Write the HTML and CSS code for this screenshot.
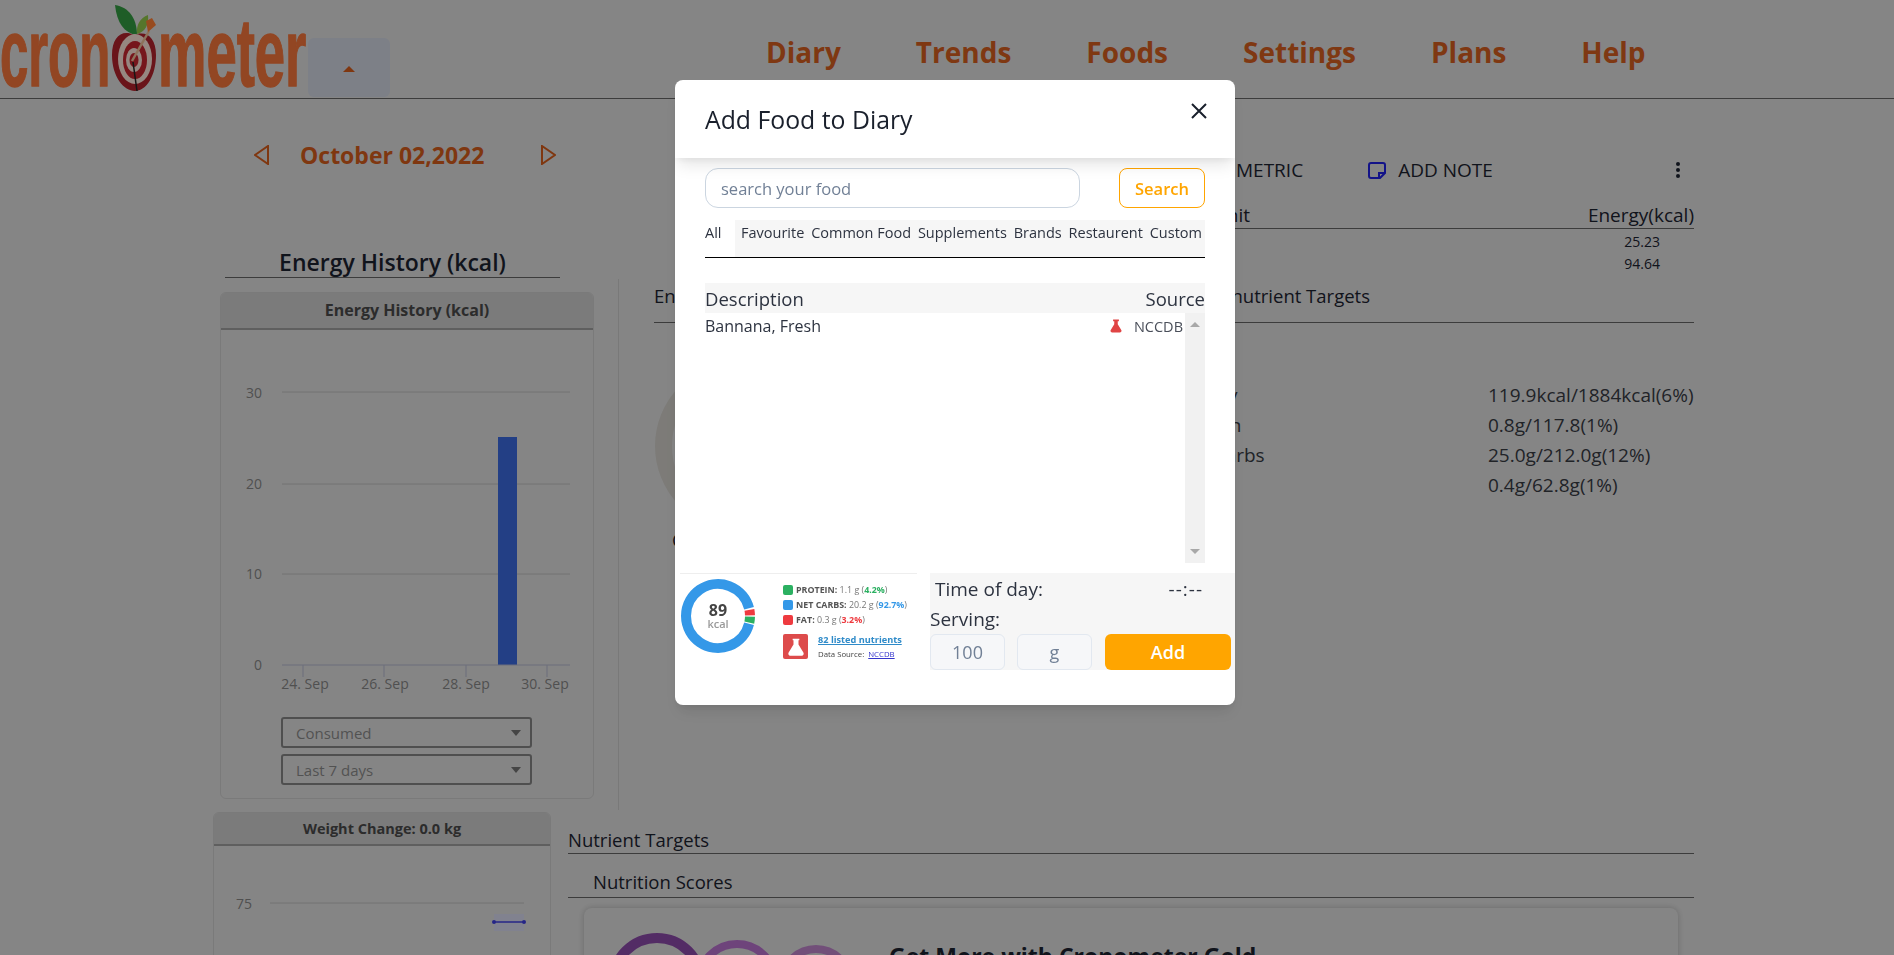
FILE: index.html
```html
<!DOCTYPE html>
<html lang="en">
<head>
  <meta charset="UTF-8">
  <meta name="viewport" content="width=device-width, initial-scale=1.0">
  <title>Cronometer</title>
  <link rel="stylesheet" href="styles.css">
</head>
<body>

  <header class="topbar">
    <div class="logo">
      <span class="logo-word logo-cron">cron</span>
      <svg class="logo-apple" width="50" height="90" viewBox="0 0 50 90">
        <path d="M4 2c14 2 22 14 22 30C13 30 6 20 4 2z" fill="#2f8f3c"/>
        <path d="M37 12c-8 3-12 10-11 19 8-2 12-9 11-19z" fill="#84b544"/>
        <path d="M23 32c-12-6-22 2-22 20 0 22 12 36 23 36s21-15 21-36c0-18-10-25-22-20z" fill="#a31f28"/>
        <ellipse cx="24" cy="56" rx="17" ry="25" fill="#e6cfc6"/>
        <ellipse cx="24" cy="57" rx="12" ry="19" fill="#b5222b"/>
        <ellipse cx="23" cy="57" rx="8" ry="12" fill="#e6cfc6"/>
        <ellipse cx="23" cy="57" rx="4.5" ry="7" fill="#b5222b"/>
        <path d="M21 58l17-30" stroke="#d9b08c" stroke-width="2.5"/>
        <path d="M37 29l-2-11 6-3 4 7z" fill="#ea7430"/>
        <path d="M22 59l4 29" stroke="#222" stroke-width="1.5"/>
      </svg>
      <span class="logo-word logo-meter">meter</span>
    </div>
    <button class="logo-toggle"><span class="caret-up"></span></button>
    <nav class="main-nav">
      <a>Diary</a>
      <a>Trends</a>
      <a>Foods</a>
      <a>Settings</a>
      <a>Plans</a>
      <a>Help</a>
    </nav>
  </header>

  <main>
    <section class="energy-row">
      <div class="energy-col">
        <div class="date-row">
          <svg width="15" height="20" viewBox="0 0 15 20"><path d="M14 1v18L1 10z" fill="none" stroke="#c4551a" stroke-width="2"/></svg>
          <span class="date-text">October 02,2022</span>
          <svg width="15" height="20" viewBox="0 0 15 20"><path d="M1 1v18l13-9z" fill="none" stroke="#c4551a" stroke-width="2"/></svg>
        </div>
        <h2 class="energy-title">Energy History (kcal)</h2>
        <div class="chart-card">
          <div class="chart-head">Energy History (kcal)</div>
          <svg class="chart" width="372" height="387" viewBox="221 330 372 387">
            <g class="grid">
              <path d="M282 392h288M282 484h288M282 574h288"/>
            </g>
            <rect x="498" y="437" width="19" height="228" fill="#3662cd"/>
            <path class="axis" d="M282 665h288M303 665v12M384 665v12M466 665v12M547 665v12"/>
            <g class="chart-label" text-anchor="end">
              <text x="262" y="398">30</text>
              <text x="262" y="489">20</text>
              <text x="262" y="579">10</text>
              <text x="262" y="670">0</text>
            </g>
            <g class="chart-label" text-anchor="middle">
              <text x="305" y="689">24. Sep</text>
              <text x="385" y="689">26. Sep</text>
              <text x="466" y="689">28. Sep</text>
              <text x="545" y="689">30. Sep</text>
            </g>
          </svg>
          <div class="chart-select">Consumed<span class="caret-down"></span></div>
          <div class="chart-select">Last 7 days<span class="caret-down"></span></div>
        </div>
      </div>

      <div class="diary-col">
        <div class="toolbar">
          <span class="toolbar-metric">METRIC</span>
          <svg class="note-icon" width="18" height="17" viewBox="0 0 18 17"><path d="M3 1h12a2 2 0 0 1 2 2v8l-5 5H3a2 2 0 0 1-2-2V3a2 2 0 0 1 2-2zM11 16v-5h6" fill="none" stroke="#1e1ed2" stroke-width="2"/></svg>
          <span class="toolbar-note">ADD NOTE</span>
          <svg class="kebab" width="6" height="18" viewBox="0 0 6 18"><circle cx="3" cy="3" r="2"/><circle cx="3" cy="9" r="2"/><circle cx="3" cy="15" r="2"/></svg>
        </div>
        <div class="diary-table">
          <div class="diary-head"><span class="diary-unit">Unit</span><span class="diary-energy">Energy(kcal)</span></div>
          <div class="diary-row"><span class="diary-energy">25.23</span></div>
          <div class="diary-row"><span class="diary-energy">94.64</span></div>
        </div>
        <div class="summary">
          <div class="summary-head">
            <span class="summary-title">Energy Summary</span>
            <span>Macronutrient Targets</span>
          </div>
          <div class="summary-body">
            <div class="summary-ring">
              <svg width="170" height="170" viewBox="0 0 170 170"><circle cx="85" cy="85" r="76.5" fill="none" stroke="#c0beb9" stroke-width="17"/></svg>
              <div class="ring-label">Consumed</div>
            </div>
            <div class="macro-rows">
              <div class="macro-row"><span>Energy</span><span>119.9kcal/1884kcal(6%)</span></div>
              <div class="macro-row"><span>Protein</span><span>0.8g/117.8(1%)</span></div>
              <div class="macro-row"><span>Net Carbs</span><span>25.0g/212.0g(12%)</span></div>
              <div class="macro-row"><span>Fat</span><span>0.4g/62.8g(1%)</span></div>
            </div>
          </div>
        </div>
      </div>
    </section>

    <section class="lower-row">
      <div class="weight-card">
        <div class="chart-head">Weight Change: 0.0 kg</div>
        <svg class="chart" width="336" height="110" viewBox="214 846 336 110">
          <g class="grid"><path d="M270 903h254"/></g>
          <text class="chart-label" x="252" y="909" text-anchor="end">75</text>
          <rect x="494" y="914" width="30" height="17" fill="#c6c8dc"/>
          <path d="M494 922h30" stroke="#3a3ad0" stroke-width="1.5"/>
          <circle cx="494" cy="922" r="2" fill="#3a3ad0"/>
          <circle cx="524" cy="922" r="2" fill="#3a3ad0"/>
        </svg>
      </div>
      <div class="targets-col">
        <h3 class="targets-head">Nutrient Targets</h3>
        <h3 class="scores-head">Nutrition Scores</h3>
        <div class="gold-card">
          <svg class="gold-rings" width="260" height="110" viewBox="0 0 260 110">
            <circle cx="43" cy="49" r="44" fill="none" stroke="#80449c" stroke-width="10"/>
            <circle cx="123" cy="49" r="38" fill="none" stroke="#aa69be" stroke-width="8"/>
            <circle cx="202" cy="50" r="34" fill="none" stroke="#af7abb" stroke-width="8"/>
          </svg>
          <div class="gold-title">Get More with Cronometer Gold</div>
        </div>
      </div>
    </section>
  </main>

  <div class="overlay"></div>

  <div class="modal">
    <div class="modal-head">
      <span class="modal-title">Add Food to Diary</span>
      <svg class="modal-close" width="16" height="16" viewBox="0 0 16 16"><path d="M1 1l14 14M15 1L1 15" stroke="#1a202c" stroke-width="2"/></svg>
    </div>

    <div class="search-row">
      <input class="search-input" type="text" placeholder="search your food">
      <button class="search-button">Search</button>
    </div>

    <div class="tabs">
      <span class="tab-all">All</span>
      <div class="tab-group">
        <span>Favourite</span>
        <span>Common Food</span>
        <span>Supplements</span>
        <span>Brands</span>
        <span>Restaurent</span>
        <span>Custom</span>
      </div>
    </div>

    <div class="food-head"><span>Description</span><span>Source</span></div>
    <div class="food-body">
      <div class="food-list">
        <div class="food-row">
          <span class="food-name">Bannana, Fresh</span>
          <svg class="flask-small" width="14" height="14" viewBox="0 0 24 24"><path d="M7 1h10v3h-2v5l6 10a2.500 2.500 0 0 1-2 4H5a2.500 2.500 0 0 1-2-4l6-10V4H7z" fill="#e04444"/></svg>
          <span class="food-source">NCCDB</span>
        </div>
      </div>
      <div class="scrollbar">
        <span class="scroll-up"></span>
        <span class="scroll-down"></span>
      </div>
    </div>

    <div class="modal-foot">
      <div class="macro-panel">
        <svg class="donut" width="76" height="76" viewBox="0 0 76 76">
          <g fill="none" stroke-width="10">
            <path d="M69.05 45.74A32 32 0 1 1 69.05 30.26" stroke="#3498e8"/>
            <path d="M69.99 38.56A32 32 0 0 1 69.3 44.65" stroke="#2bb061"/>
            <path d="M69.99 37.44A32 32 0 0 0 69.41 31.89" stroke="#ee3a3f"/>
          </g>
          <text class="donut-value" x="38" y="38" text-anchor="middle">89</text>
          <text class="donut-unit" x="38" y="50" text-anchor="middle">kcal</text>
        </svg>
        <div class="macro-legend">
          <div class="legend-row"><i class="swatch swatch-green"></i><b>PROTEIN:</b>&nbsp;1.1 g (<b class="text-green">4.2%</b>)</div>
          <div class="legend-row"><i class="swatch swatch-blue"></i><b>NET CARBS:</b>&nbsp;20.2 g (<b class="text-blue">92.7%</b>)</div>
          <div class="legend-row"><i class="swatch swatch-red"></i><b>FAT:</b>&nbsp;0.3 g (<b class="text-red">3.2%</b>)</div>
          <div class="legend-source">
            <div class="flask-box">
              <svg width="20" height="20" viewBox="0 0 24 24"><path d="M8 2h8v2h-1v5l6 10a2.500 2.500 0 0 1-2 3.500H5A2.500 2.500 0 0 1 3 19L9 9V4H8z" fill="#fff"/></svg>
            </div>
            <div>
              <a class="nutrient-link">82 listed nutrients</a>
              <div class="data-source">Data Source: <a>NCCDB</a></div>
            </div>
          </div>
        </div>
      </div>

      <div class="entry-panel">
        <div class="time-row"><span>Time of day:</span><span class="time-value">--:--</span></div>
        <div class="serving-label">Serving:</div>
        <div class="serving-row">
          <input class="serving-input" type="text" value="100">
          <input class="serving-input" type="text" value="g">
          <button class="add-button">Add</button>
        </div>
      </div>
    </div>
  </div>

</body>
</html>
```

FILE: styles.css
```css
* {
  box-sizing: border-box;
}

body {
  margin: 0;
  height: 955px;
  overflow: hidden;
  background-color: #cdcdcd;
  color: #1a202c;
  font-family: "Open Sans", "Noto Sans", sans-serif;
}

h2, h3 {
  margin: 0;
  font-weight: 400;
}

/* top bar */
.topbar {
  display: flex;
  height: 99px;
  border-bottom: 1px solid #5c5c5c;
}

.logo {
  display: flex;
  width: 308px;
  height: 98px;
  flex-shrink: 0;
}

.logo-word {
  display: block;
  margin-top: 5px;
  font-family: "Liberation Sans", sans-serif;
  font-size: 96px;
  line-height: 96px;
  font-weight: 700;
  color: #e06c36;
  -webkit-text-stroke: 1.5px #e06c36;
  transform-origin: left top;
}

.logo-cron {
  margin-right: -97px;
  transform: scaleX(0.53);
}

.logo-meter {
  margin-right: -113px;
  transform: scaleX(0.567);
}

.logo-apple {
  flex-shrink: 0;
  margin: 3px -3px 0 0;
}

.logo-toggle {
  display: flex;
  align-items: center;
  justify-content: center;
  width: 82px;
  height: 59px;
  margin-top: 38px;
  padding: 0;
  border: none;
  border-radius: 6px;
  background-color: #c0c5d0;
}

.caret-up {
  margin-top: 3px;
  border-left: 6px solid transparent;
  border-right: 6px solid transparent;
  border-bottom: 6px solid #c4551a;
}

.main-nav {
  display: flex;
  gap: 75px;
  margin-left: 376px;
  padding-top: 31px;
  font-size: 28px;
  line-height: 42px;
  font-weight: 700;
  color: #c4571c;
}

/* energy column */
.energy-row {
  display: flex;
  height: 713px;
  padding-left: 219px;
}

.energy-col {
  width: 399px;
  flex-shrink: 0;
}

.date-row {
  display: flex;
  align-items: center;
  height: 34px;
  margin-top: 39px;
  padding-left: 35px;
}

.date-text {
  width: 272px;
  padding-left: 31px;
  font-size: 23px;
  font-weight: 700;
  color: #c4551a;
}

.energy-title {
  width: 335px;
  margin: 75px 0 14px 6px;
  border-bottom: 1px solid #5c5c5c;
  font-size: 23px;
  line-height: 30px;
  font-weight: 600;
  text-align: center;
}

.chart-card {
  width: 374px;
  height: 507px;
  margin-left: 1px;
  border: 1px solid #bcbcbc;
  border-radius: 6px;
}

.chart-head {
  height: 37px;
  border-bottom: 2px solid #939393;
  border-radius: 5px 5px 0 0;
  background-color: #bdbdbd;
  color: #444;
  font-size: 16px;
  line-height: 34px;
  font-weight: 700;
  text-align: center;
}

.chart {
  display: block;
}

.grid path {
  fill: none;
  stroke: #b0b0b0;
}

.axis {
  fill: none;
  stroke: #a5a9bd;
}

.chart-label {
  fill: #7b7b7b;
  font-size: 14px;
}

.chart-select {
  display: flex;
  align-items: center;
  justify-content: space-between;
  width: 251px;
  height: 31px;
  margin: 0 0 6px 60px;
  padding: 0 9px 0 13px;
  border: 2px solid #7a7a7a;
  border-radius: 3px;
  color: #7f7f7f;
  font-size: 15px;
}

.caret-down {
  border-left: 5px solid transparent;
  border-right: 5px solid transparent;
  border-top: 6px solid #6a6a6a;
}

/* diary column */
.diary-col {
  width: 1076px;
  flex-shrink: 0;
}

.toolbar {
  display: flex;
  align-items: center;
  height: 34px;
  margin-top: 54px;
  padding-left: 618px;
  font-size: 19px;
}

.note-icon {
  margin-left: 65px;
}

.toolbar-note {
  width: 277px;
  margin-left: 12px;
}

.kebab {
  fill: #1a202c;
}

.diary-table {
  margin-top: 15px;
}

.diary-head {
  display: flex;
  height: 27px;
  border-bottom: 1px solid #5c5c5c;
  margin-left: 300px;
  padding-left: 295px;
  font-size: 19px;
  line-height: 26px;
}

.diary-unit {
  width: 332px;
}

.diary-head .diary-energy {
  margin-left: auto;
}

.diary-row {
  display: flex;
  justify-content: flex-end;
  height: 22px;
  padding-right: 34px;
  font-size: 14px;
  line-height: 25px;
}

.summary {
  height: 531px;
  margin-top: 6px;
  padding-left: 35px;
  border-left: 1px solid #bababa;
}

.summary-head {
  display: flex;
  height: 44px;
  border-bottom: 1px solid #5c5c5c;
  font-size: 18.5px;
  line-height: 33px;
}

.summary-title {
  width: 523px;
}

.summary-body {
  display: flex;
}

.summary-ring {
  width: 523px;
  padding: 38px 0 0 1px;
}

.summary-ring svg {
  display: block;
}

.ring-label {
  margin: -2px 0 0 17px;
  font-size: 18.5px;
  line-height: 22px;
}

.macro-rows {
  margin-top: 57px;
}

.macro-row {
  display: grid;
  grid-template-columns: 311px 206px;
  font-size: 19px;
  line-height: 30px;
  color: #33363d;
}

/* lower row */
.lower-row {
  display: flex;
  gap: 17px;
  padding-left: 213px;
}

.weight-card {
  width: 338px;
  height: 200px;
  flex-shrink: 0;
  border: 1px solid #bcbcbc;
  border-radius: 6px;
}

.weight-card .chart-head {
  height: 33px;
  font-size: 14.5px;
  line-height: 32px;
}

.targets-col {
  width: 1126px;
}

.targets-head {
  padding-top: 14px;
  border-bottom: 1px solid #5c5c5c;
  font-size: 18.5px;
  line-height: 27px;
}

.scores-head {
  padding: 13px 0 0 25px;
  border-bottom: 1px solid #5c5c5c;
  font-size: 18.5px;
  line-height: 30px;
}

.gold-card {
  display: flex;
  width: 1094px;
  height: 160px;
  margin: 10px 0 0 16px;
  padding: 25px 0 0 30px;
  border-radius: 8px;
  box-shadow: 0 0 6px rgba(0, 0, 0, 0.2);
}

.gold-title {
  margin: 8px 0 0 15px;
  font-size: 23px;
  line-height: 30px;
  font-weight: 700;
}

/* modal */
.overlay {
  position: fixed;
  top: 0;
  left: 0;
  width: 100%;
  height: 100%;
  background-color: rgba(0, 0, 0, 0.35);
}

.modal {
  position: fixed;
  top: 80px;
  left: 675px;
  width: 560px;
  height: 625px;
  border-radius: 8px;
  background-color: #fff;
  box-shadow: 0 10px 15px -3px rgba(0, 0, 0, 0.1), 0 4px 6px -2px rgba(0, 0, 0, 0.05);
  color: #1a202c;
  overflow: hidden;
}

.modal-head {
  position: relative;
  display: flex;
  justify-content: space-between;
  height: 78px;
  padding: 0 28px 0 30px;
  box-shadow: 0 10px 15px -3px rgba(0, 0, 0, 0.1), 0 4px 6px -2px rgba(0, 0, 0, 0.05);
}

.modal-title {
  font-size: 24.8px;
  line-height: 79px;
  font-weight: 500;
}

.modal-close {
  margin-top: 23px;
}

.search-row {
  display: flex;
  justify-content: space-between;
  height: 40px;
  margin: 10px 30px 0;
}

.search-input {
  width: 375px;
  padding: 0 15px;
  border: 1px solid #cbd5e0;
  border-radius: 13px;
  font-family: inherit;
  font-size: 16.5px;
  color: #1a202c;
}

.search-input::placeholder {
  color: #718096;
  opacity: 1;
}

.search-button {
  width: 86px;
  padding: 0;
  border: 1px solid #ffa500;
  border-radius: 8px;
  background-color: #fff;
  color: #ffa500;
  font-family: inherit;
  font-size: 16.5px;
  font-weight: 600;
}

.tabs {
  display: flex;
  height: 38px;
  margin: 12px 30px 0;
  border-bottom: 1px solid #000;
  font-size: 14.5px;
  line-height: 26px;
  color: #2d3340;
}

.tab-all {
  width: 30px;
}

.tab-group {
  display: flex;
  flex: 1;
  justify-content: space-between;
  padding: 0 3px 0 6px;
  background-color: #f6f6f6;
}

.food-head {
  display: flex;
  justify-content: space-between;
  height: 30px;
  margin: 25px 30px 0;
  background-color: #f6f6f6;
  color: #2d3340;
  font-size: 18.5px;
  line-height: 32px;
}

.food-body {
  display: flex;
  height: 250px;
  margin: 0 30px;
}

.food-list {
  flex: 1;
}

.food-row {
  display: flex;
  align-items: center;
  height: 26px;
  padding-right: 2px;
  color: #2d3340;
}

.food-name {
  flex: 1;
  font-size: 16px;
}

.flask-small {
  margin-right: 11px;
}

.food-source {
  font-size: 14.5px;
  color: #4a4f5a;
}

.scrollbar {
  display: flex;
  flex-direction: column;
  align-items: center;
  justify-content: space-between;
  width: 20px;
  padding: 9px 0;
  background-color: #f1f1f1;
}

.scroll-up {
  border-left: 5px solid transparent;
  border-right: 5px solid transparent;
  border-bottom: 5px solid #a8a8a8;
}

.scroll-down {
  border-left: 5px solid transparent;
  border-right: 5px solid transparent;
  border-top: 5px solid #a8a8a8;
}

.modal-foot {
  display: flex;
  margin: 10px 0 0 5px;
}

.macro-panel {
  display: flex;
  width: 237px;
  height: 97px;
  padding-top: 4px;
  border-top: 1px solid #eee;
}

.donut {
  flex-shrink: 0;
}

.donut-value {
  font-size: 16px;
  font-weight: 700;
  fill: #444;
}

.donut-unit {
  font-size: 11px;
  font-weight: 600;
  fill: #999;
}

.macro-legend {
  margin-left: 27px;
  padding-top: 4px;
  font-size: 8.9px;
  color: #777;
}

.macro-legend b {
  font-weight: 700;
}

.legend-row {
  display: flex;
  align-items: center;
  height: 15px;
  white-space: nowrap;
}

.legend-row > b:first-of-type {
  color: #555;
}

.swatch {
  width: 10px;
  height: 10px;
  margin-right: 3px;
  border-radius: 2px;
}

.swatch-green {
  background-color: #2bb061;
}

.swatch-blue {
  background-color: #3498e8;
}

.swatch-red {
  background-color: #ee3a3f;
}

.text-green {
  color: #2bb061;
}

.text-blue {
  color: #3498e8;
}

.text-red {
  color: #ee3a3f;
}

.legend-source {
  display: flex;
  gap: 10px;
  margin-top: 7px;
}

.flask-box {
  display: flex;
  align-items: center;
  justify-content: center;
  width: 25px;
  height: 25px;
  border-radius: 2px;
  background-color: #dd4b4b;
}

.nutrient-link {
  display: block;
  font-size: 9.2px;
  font-weight: 700;
  line-height: 12px;
  color: #2f8bc9;
  text-decoration: underline;
}

.data-source {
  margin-top: 3px;
  font-size: 7.8px;
  line-height: 11px;
  color: #444;
}

.data-source a {
  margin-left: 2px;
  color: #3333cc;
  text-decoration: underline;
}

.entry-panel {
  width: 305px;
  height: 97px;
  margin-left: 13px;
  padding-top: 1px;
  background-color: #f6f6f6;
  color: #2d3340;
  font-size: 19px;
  line-height: 30px;
}

.time-row {
  display: flex;
  justify-content: space-between;
  padding: 0 32px 0 5px;
}

.time-value {
  letter-spacing: 1px;
}

.serving-row {
  display: flex;
  height: 36px;
}

.serving-input {
  width: 75px;
  margin-right: 12px;
  border: 1px solid #e2e8f0;
  border-radius: 6px;
  background-color: #f6f7f9;
  color: #718096;
  font-family: inherit;
  font-size: 18px;
  text-align: center;
}

.add-button {
  width: 126px;
  margin-left: 1px;
  border: none;
  border-radius: 6px;
  background-color: #ffa500;
  color: #fff;
  font-family: inherit;
  font-size: 18px;
  font-weight: 600;
}
```
